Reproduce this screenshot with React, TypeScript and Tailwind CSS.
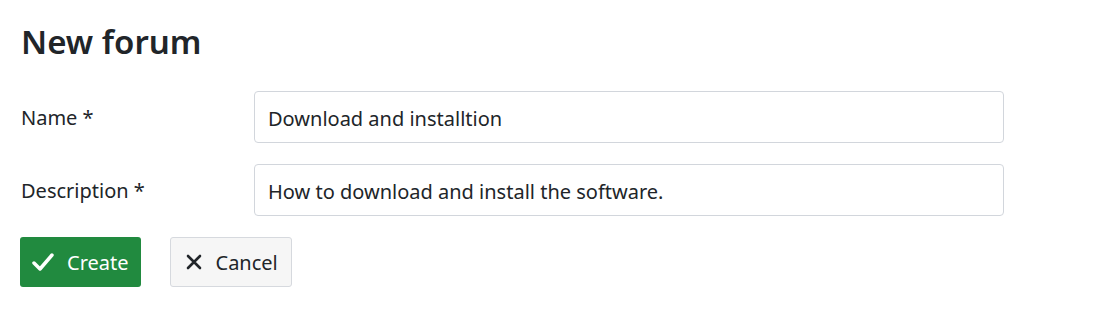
import { useState } from 'react'

export default function App() {
  const [name, setName] = useState('Download and installtion')
  const [description, setDescription] = useState('How to download and install the software.')

  return (
    <div className="min-h-screen bg-white px-[21px] pt-[20px] text-[#212529]" style={{ fontFamily: '"Noto Sans", "Open Sans", sans-serif' }}>
      <h1 className="text-[33px] font-semibold leading-[44px]">New forum</h1>

      <div className="mt-[27px] flex flex-col gap-[21px]">
        <div className="flex items-center">
          <label className="w-[233px] pt-[2px] text-[20px]">Name *</label>
          <input
            value={name}
            onChange={(e) => setName(e.target.value)}
            className="h-[52px] w-[750px] rounded border border-[#d2d6dc] px-[13px] pt-[2px] text-[20px] outline-none"
          />
        </div>
        <div className="flex items-center">
          <label className="w-[233px] pt-[2px] text-[20px]">Description *</label>
          <input
            value={description}
            onChange={(e) => setDescription(e.target.value)}
            className="h-[52px] w-[750px] rounded border border-[#d2d6dc] px-[13px] pt-[2px] text-[20px] outline-none"
          />
        </div>

        <div className="flex gap-[29px]">
          <button className="-ml-px flex h-[50px] items-center gap-[13px] rounded-[3px] bg-[#218a3f] pl-[12px] pr-[12px] pt-[2px] text-[20px] text-white">
            <svg width="22" height="20" viewBox="0 0 22 20" fill="none" className="-mt-[2px]">
              <path d="M2 11l6 6L20 3" stroke="white" strokeWidth="3.5" strokeLinecap="round" strokeLinejoin="round" />
            </svg>
            Create
          </button>
          <button className="flex h-[50px] items-center gap-[14px] rounded-[3px] border border-[#d6d9de] bg-[#f6f6f6] pl-[15px] pr-[13px] pt-[2px] text-[20px] text-[#212529]">
            <svg width="16" height="16" viewBox="0 0 16 16" fill="none" className="-mt-[2px]">
              <path d="M2 2l12 12M14 2L2 14" stroke="#212529" strokeWidth="2.6" strokeLinecap="round" />
            </svg>
            Cancel
          </button>
        </div>
      </div>
    </div>
  )
}
